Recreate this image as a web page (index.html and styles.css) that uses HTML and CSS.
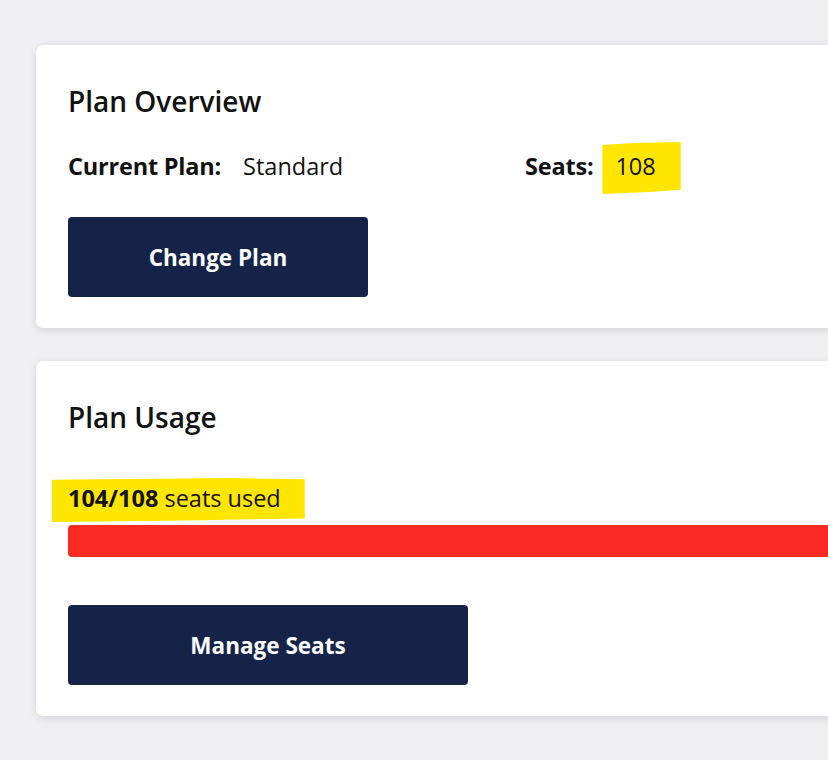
FILE: index.html
```html
<!DOCTYPE html>
<html>
<head>
<meta charset="utf-8">
<link rel="stylesheet" href="styles.css">
</head>
<body>
<main class="page">
  <section class="card">
    <h2 class="card-title">Plan Overview</h2>
    <div class="plan-row">
      <div class="field">
        <span class="label">Current Plan:</span>
        <span class="value">Standard</span>
      </div>
      <div class="field">
        <span class="label">Seats:</span>
        <span class="value mark mark-seats">108</span>
      </div>
    </div>
    <button class="btn btn-change">Change Plan</button>
  </section>
  <section class="card">
    <h2 class="card-title">Plan Usage</h2>
    <div class="usage">
      <span class="mark mark-usage"><strong>104/108</strong> seats used</span>
    </div>
    <div class="bar"><div class="bar-fill" style="width:100%"></div></div>
    <button class="btn btn-manage">Manage Seats</button>
  </section>
</main>
</body>
</html>
```
FILE: styles.css
```css
* { box-sizing: border-box; }
html, body {
  margin: 0;
  padding: 0;
  background: #f0f0f4;
  overflow: hidden;
}
body {
  font-family: "Open Sans", "Noto Sans", "Liberation Sans", sans-serif;
  color: #111;
  width: 828px;
  height: 760px;
}
.page {
  padding: 45px 0 0 36px;
  display: flex;
  flex-direction: column;
  gap: 33px;
}
.card {
  width: 1000px;
  background: #fff;
  border-radius: 7px;
  box-shadow: 0 2px 8px rgba(0, 0, 0, 0.12);
  padding: 32px 32px 31px;
}
.card-title {
  margin: 0;
  font-size: 28px;
  font-weight: 600;
  line-height: 48px;
  color: #111;
}
.plan-row {
  display: grid;
  grid-template-columns: 457px auto;
  margin-top: 22px;
  line-height: 38px;
  font-size: 23.5px;
}
.field { display: flex; gap: 22px; }
.label { font-weight: 700; letter-spacing: -0.2px; }
.value { font-weight: 400; }
.mark { position: relative; z-index: 0; }
.mark::before {
  content: "";
  position: absolute;
  z-index: -1;
  background: #ffe600;
}
.mark-seats::before {
  left: -13px; right: -25px; top: -5px; bottom: -9px;
  clip-path: polygon(0 6%, 40% 2%, 100% 0, 100% 92%, 60% 96%, 0 100%);
}
.btn {
  display: block;
  height: 80px;
  border: none;
  border-radius: 4px;
  background: #162349;
  color: #fff;
  font-family: inherit;
  font-size: 22.5px;
  font-weight: 700;
  cursor: pointer;
}
.btn-change { width: 300px; margin-top: 32px; }
.btn-manage { width: 400px; margin-top: 48px; }
.usage {
  margin-top: 41px;
  font-size: 23.5px;
  line-height: 32px;
}
.usage strong { font-weight: 700; }
.mark-usage::before {
  left: -16px; right: -24px; top: -4px; bottom: -8px;
  clip-path: polygon(0 4%, 70% 0, 100% 3%, 100% 92%, 40% 98%, 0 100%);
}
.bar {
  margin-top: 11px;
  height: 32px;
  border-radius: 4px;
  background: #e6e6ea;
  overflow: hidden;
}
.bar-fill {
  height: 100%;
  background: #f92a22;
}
```
